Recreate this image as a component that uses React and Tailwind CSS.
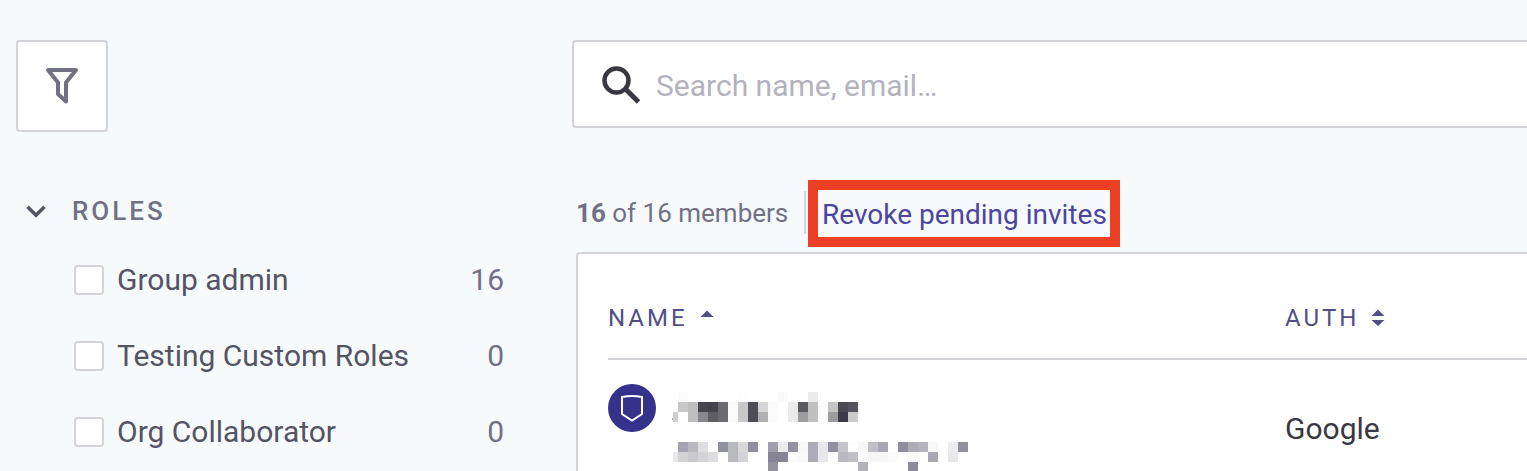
const nameCells = [
  [392, { 0: '#fafafa', 6: '#fdfdfd', 10: '#fafafa', 13: '#ebebeb' }],
  [402, { 0: '#c8c8c9', 1: '#bfbfbf', 2: '#47464f', 3: '#44434c', 4: '#6b6a71', 5: '#fafafa', 6: '#c8c8c9', 7: '#4e4d56', 8: '#d5d5d7', 9: '#fbfbfb', 11: '#eaeaea', 12: '#5a5960', 13: '#c0c0c0', 14: '#fcfcfc', 15: '#c4c4c5', 16: '#4a4952', 17: '#55545c' }],
  [412, { '-1': '#cfcfd0', 1: '#bfbfbf', 2: '#88888c', 3: '#5f5e65', 4: '#6b6a71', 5: '#fafafa', 6: '#c8c8c9', 7: '#4e4d56', 8: '#b0b0b2', 9: '#fbfbfb', 11: '#eaeaea', 12: '#9d9d9f', 13: '#c0c0c0', 14: '#fcfcfc', 15: '#9c9c9e', 16: '#3d3b48', 17: '#cbcbcc' }],
  [442, { 0: '#a4a3b0', 1: '#b9babf', 2: '#dfdfe1', 4: '#908f9c', 5: '#b8b9be', 6: '#d8d8db', 7: '#918f9d', 9: '#9f9eac', 10: '#ebebed', 11: '#9291a0', 12: '#f7f7f8', 13: '#acabb7', 14: '#e8e8ec', 15: '#918f9e', 16: '#c4c4ca', 17: '#fdfdfd', 18: '#f6f6f6', 19: '#c0bfc7', 20: '#a9a8b3', 22: '#8f8d9b', 23: '#adacb6', 24: '#b4b3bb', 25: '#f7f7f7', 27: '#ececee', 28: '#918f9e' }],
  [452, { '-1': '#e8e8ea', 0: '#d2d2d7', 1: '#cacace', 2: '#d2d2d7', 3: '#dcdce1', 5: '#b8b9be', 6: '#d2d2d7', 9: '#878595', 10: '#878595', 11: '#fcfcfc', 12: '#f8f8f8', 13: '#acabb7', 14: '#e8e8ec', 16: '#b9babf', 17: '#bfbfc4', 18: '#fbfbfb', 19: '#f5f5f5', 20: '#f6f6f6', 21: '#fafafa', 23: '#f9f9f9', 25: '#a9a8b3', 27: '#e8e8ea' }],
  [462, { 9: '#9391a0', 18: '#b3b2b9', 23: '#8d8b9a' }],
];

function RedactedName() {
  return (
    <svg className="ml-4 block shrink-0" width="300" height="87" viewBox="672 384 300 87" shapeRendering="crispEdges">
      <rect x="672" y="418" width="1" height="2" fill="#a5a5a8" />
      {nameCells.flatMap(([y, cells]) =>
        Object.entries(cells).map(([i, fill]) => {
          const col = Number(i);
          return <rect key={`${y}-${i}`} x={col < 0 ? 673 : 678 + col * 10} y={y} width={col < 0 ? 5 : 10} height="10" fill={fill} />;
        })
      )}
    </svg>
  );
}

const roles = [
  { name: 'Group admin', count: 16 },
  { name: 'Testing Custom Roles', count: 0 },
  { name: 'Org Collaborator', count: 0 },
];

function Sidebar() {
  return (
    <aside className="w-[572px] shrink-0 pl-4 pt-10">
      <button className="flex h-[92px] w-[92px] items-center justify-center rounded-[4px] border-2 border-[#d3d3d9] bg-white">
        <svg width="36" height="40" viewBox="44 66 36 40" fill="none" stroke="#727184" strokeWidth="4" strokeLinejoin="round">
          <path d="M48 70H76L66 82.500V101.500L58 94V82.500Z" />
        </svg>
      </button>
      <div className="mt-[59px] flex h-10 items-center">
        <svg className="ml-[9px]" width="22" height="14" viewBox="25 204 22 14" fill="none" stroke="#555463" strokeWidth="3.500">
          <path d="M27.500 206.700L36 215.200L44.500 206.700" />
        </svg>
        <h2 className="ml-[25px] text-[26px] font-medium leading-10 tracking-[3px] text-[#727184]">ROLES</h2>
      </div>
      <ul className="pt-[30px]">
        {roles.map((r) => (
          <li key={r.name} className="flex h-[76px] w-[488px] items-start pl-[58px] pt-1">
            <span className="h-[30px] w-[30px] rounded-[4px] border-2 border-[#d3d3d9] bg-white" />
            <span className="ml-[13px] text-[30px] leading-[30px] text-[#555463]">{r.name}</span>
            <span className="ml-auto text-[30px] leading-[30px] text-[#727184]">{r.count}</span>
          </li>
        ))}
      </ul>
    </aside>
  );
}

export default function App() {
  return (
    <div className="flex h-[471px] w-[1527px] overflow-hidden bg-[#f6fafd] font-[Roboto,sans-serif] whitespace-nowrap">
      <Sidebar />
      <main className="w-[955px] shrink-0 pt-10">
        <div className="flex h-[88px] w-[970px] items-center rounded-[4px] border-2 border-[#d3d3d9] bg-white pl-[26px]">
          <svg width="42" height="42" viewBox="600 63 42 42" fill="none" stroke="#393842">
            <circle cx="616.500" cy="80.500" r="12" strokeWidth="4.500" />
            <path d="M625.500 89L638.500 102" strokeWidth="5" />
          </svg>
          <span className="ml-[14px] pt-1 text-[30px] leading-[40px] text-[#b3b2bd]">Search name, email…</span>
        </div>
        <div className="flex h-[124px] pl-1 pt-[52px]">
          <span className="mt-[13px] w-[228px] text-[26px] leading-10 text-[#727184]">
            <b className="font-bold">16</b> of 16 members
          </span>
          <span className="mt-[11px] h-[43px] w-0.5 bg-[#d3d3d9]" />
          <a className="ml-0.5 flex h-[67px] w-[312px] items-center border-[10px] border-[#ec4025] pl-1 pt-0.5 text-[28px] text-[#4b45a1]">
            Revoke pending invites
          </a>
        </div>
        <section className="ml-1 h-[240px] w-[970px] rounded-tl-[4px] border-2 border-[#d3d3d9] bg-white pl-[30px]">
          <div className="flex h-[106px] items-center border-b-2 border-[#d3d3d9] pt-[23px] text-[24px] tracking-[3px] text-[#514e86]">
            <div className="flex w-[677px] items-center">
              NAME
              <svg className="ml-[12px]" width="14" height="20" viewBox="0 0 14 20"><path d="M0.500 9L7 2.500L13.500 9Z" fill="#514e86" /></svg>
            </div>
            <div className="flex items-center">
              AUTH
              <svg className="ml-[12px]" width="14" height="18" viewBox="0 0 14 18"><path d="M0.500 7L7 0.500L13.500 7ZM0.500 11L7 17L13.500 11Z" fill="#514e86" /></svg>
            </div>
          </div>
          <div className="flex pt-6">
            <svg className="shrink-0" width="48" height="48" viewBox="0 0 48 48">
              <circle cx="24" cy="24" r="24" fill="#34328a" />
              <path d="M14 13Q24 11 34 13V30L24 36.500L14 30Z" fill="none" stroke="#fff" strokeWidth="2" />
            </svg>
            <RedactedName />
            <span className="ml-[313px] pt-[25px] text-[30px] leading-10 text-[#393842]">Google</span>
          </div>
        </section>
      </main>
    </div>
  );
}
